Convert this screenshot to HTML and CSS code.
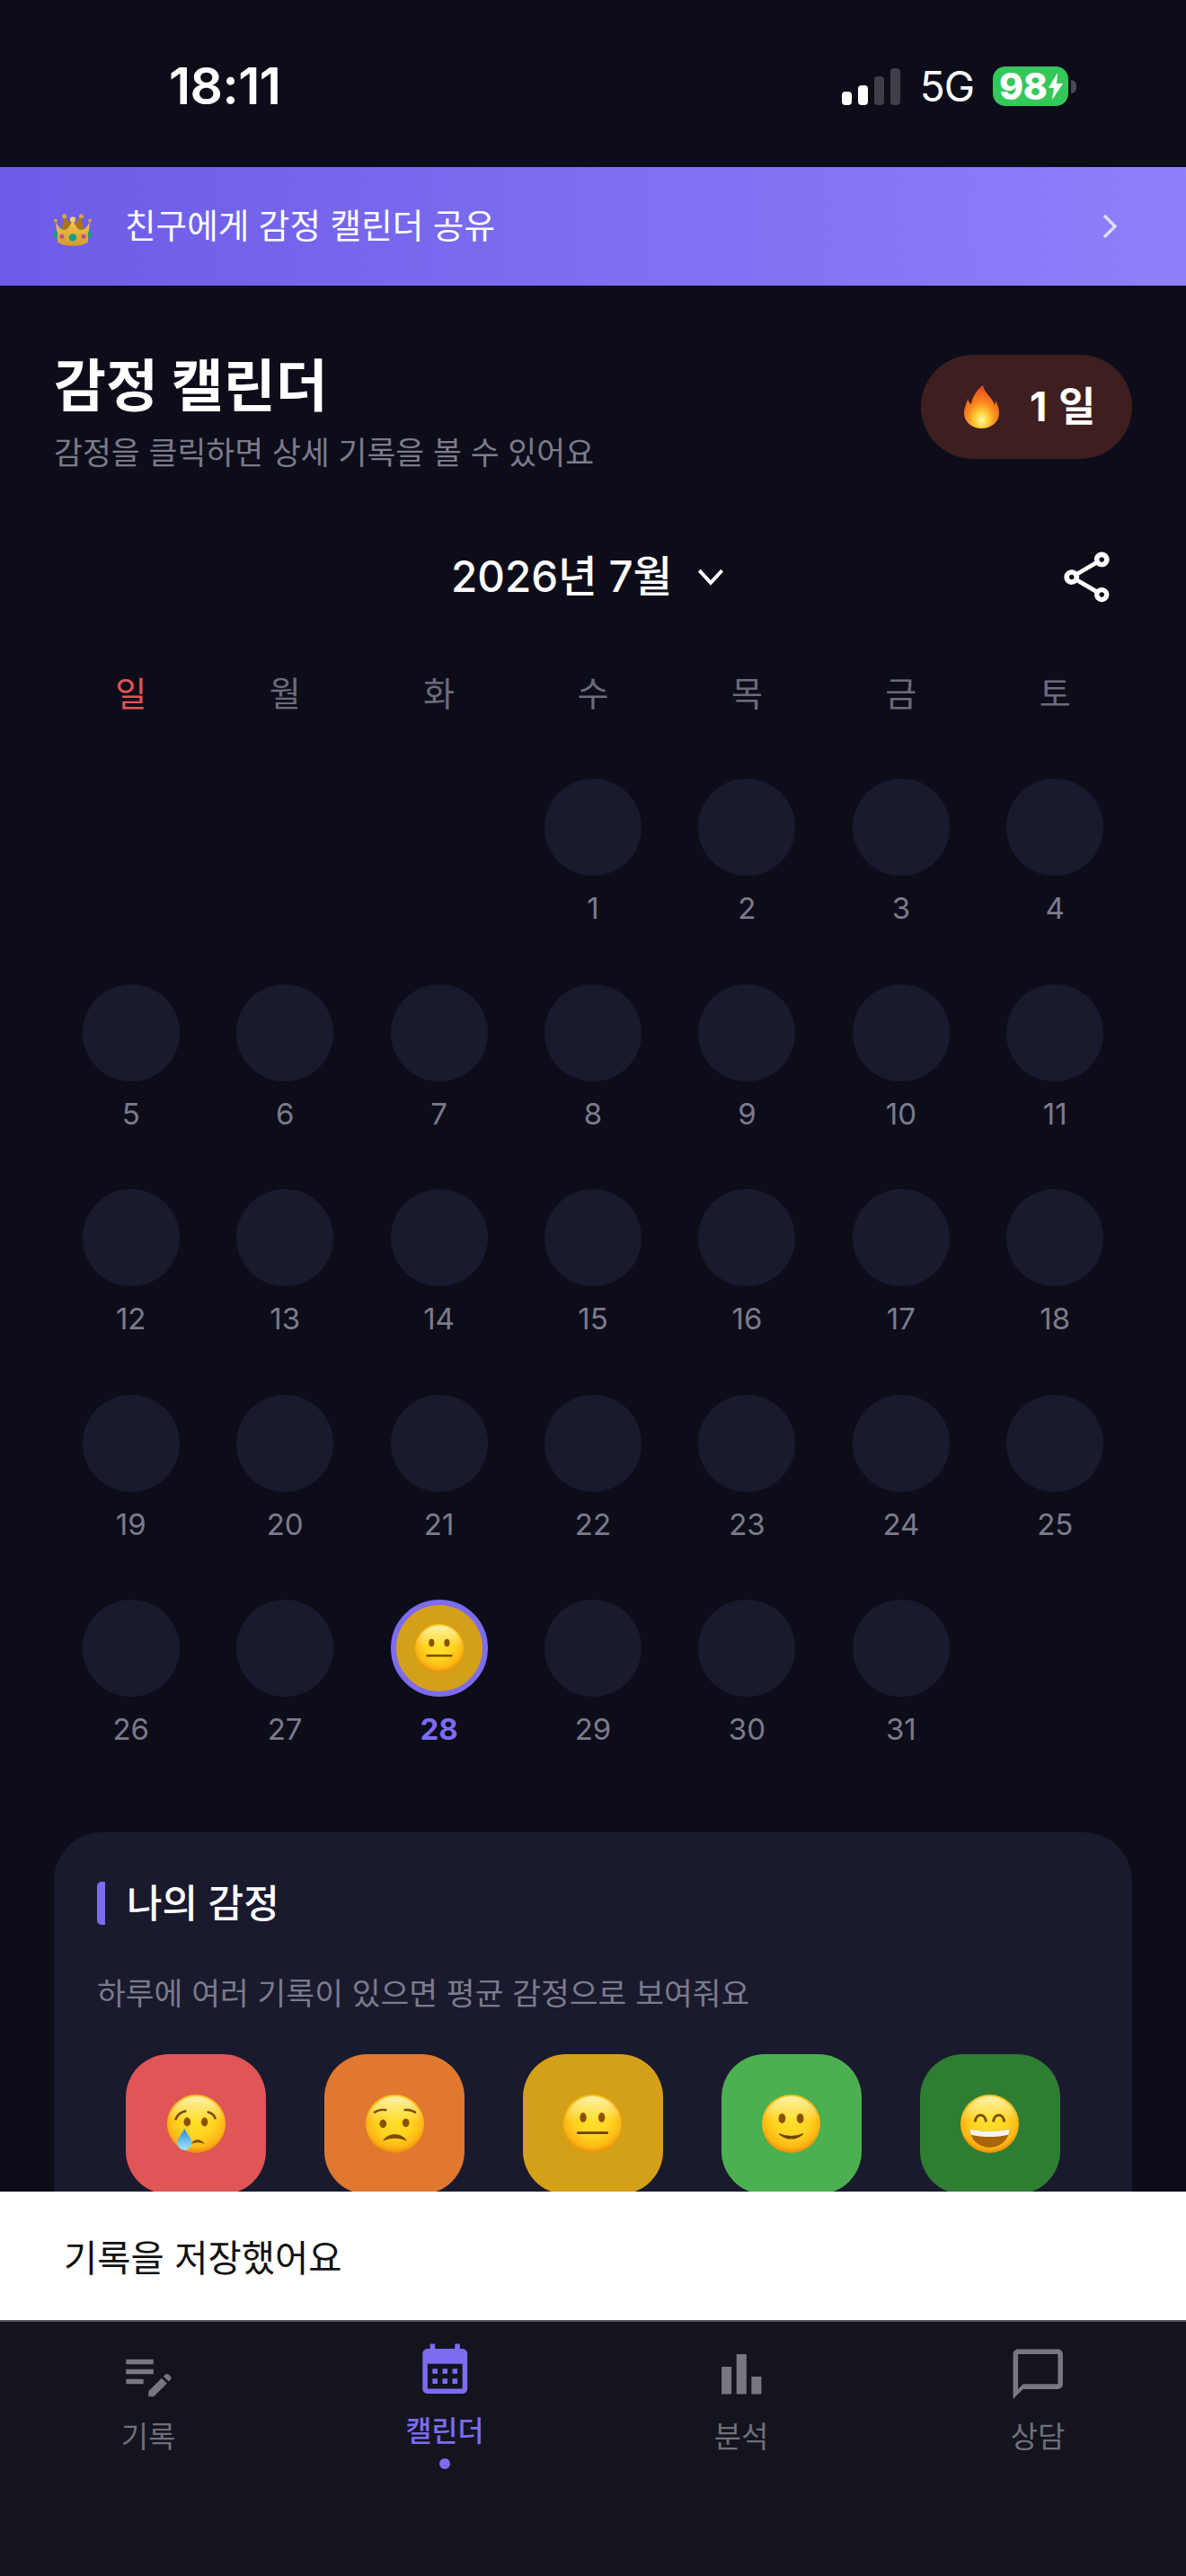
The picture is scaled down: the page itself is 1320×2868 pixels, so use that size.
FILE: index.html
```html
<!DOCTYPE html>
<html lang="ko">
<head>
<meta charset="utf-8">
<title>감정 캘린더</title>
<link rel="stylesheet" href="styles.css">
</head>
<body>
<svg class="defs" width="0" height="0" aria-hidden="true">
  <defs>
    <radialGradient id="face" cx="50%" cy="42%" r="58%">
      <stop offset="0" stop-color="#ffe22e"/>
      <stop offset=".55" stop-color="#ffd21f"/>
      <stop offset=".85" stop-color="#fdb515"/>
      <stop offset="1" stop-color="#e98c05"/>
    </radialGradient>
    <linearGradient id="shine" x1="0" y1="0" x2="0" y2="1">
      <stop offset="0" stop-color="#fff9c4" stop-opacity=".85"/>
      <stop offset=".45" stop-color="#fff9c4" stop-opacity="0"/>
    </linearGradient>
    <linearGradient id="drop" x1="0" y1="0" x2="0" y2="1">
      <stop offset="0" stop-color="#1e88d8"/>
      <stop offset="1" stop-color="#a6e6fb"/>
    </linearGradient>
    <radialGradient id="flame" cx="50%" cy="80%" r="72%">
      <stop offset="0" stop-color="#fff8b0"/>
      <stop offset=".25" stop-color="#ffd23a"/>
      <stop offset=".55" stop-color="#fb8c1e"/>
      <stop offset="1" stop-color="#e8501c"/>
    </radialGradient>
    <linearGradient id="gold" x1="0" y1="0" x2="0" y2="1">
      <stop offset="0" stop-color="#f3c955"/>
      <stop offset="1" stop-color="#d49a2a"/>
    </linearGradient>
    <g id="disc">
      <circle cx="32" cy="32" r="32" fill="url(#face)"/>
      <circle cx="32" cy="32" r="30" fill="url(#shine)"/>
    </g>
  </defs>
</svg>
<div class="app">
  <div class="scroll">
    <header class="status">
      <span class="time">18:11</span>
      <span class="signal"><i class="s1"></i><i class="s2"></i><i class="s3"></i><i class="s4"></i></span>
      <span class="net">5G</span>
      <span class="battery">98<svg class="bolt" viewBox="0 0 18 30"><path d="M11 0 1 17h6L5 30 17 12h-7z" fill="#fff"/></svg></span>
      <span class="nub"></span>
    </header>

    <div class="banner">
      <svg class="crown" viewBox="0 0 40 34">
        <path d="M7 22 11 3l9 10 9-10 4 19z" fill="#a8741c"/>
        <path d="M2 8c2 5 5 9 9 9 4 0 7-6 9-11 2 5 5 11 9 11 4 0 7-4 9-9l-2 22c-5 3-10 4-16 4S9 33 4 30z" fill="url(#gold)"/>
        <circle cx="1.8" cy="7" r="1.8" fill="#d8a53a"/>
        <circle cx="11" cy="2.4" r="2.4" fill="#d8a53a"/>
        <circle cx="20" cy="6" r="3" fill="#f0cb60"/>
        <circle cx="29" cy="2.4" r="2.4" fill="#d8a53a"/>
        <circle cx="38.2" cy="7" r="1.8" fill="#d8a53a"/>
        <ellipse cx="2" cy="22" rx="2" ry="4" fill="#1f9c7c"/>
        <circle cx="8.500" cy="24" r="2.400" fill="#c9478e"/>
        <circle cx="20" cy="25" r="4" fill="#14a083"/>
        <circle cx="31.500" cy="24" r="2.400" fill="#c9478e"/>
        <ellipse cx="38" cy="22" rx="2" ry="4" fill="#1f9c7c"/>
      </svg>
      <span class="banner-text">친구에게 감정 캘린더 공유</span>
      <svg class="banner-arrow" viewBox="0 0 18 28"><path d="M3 2l12 12L3 26" fill="none" stroke="#fff" stroke-opacity=".72" stroke-width="3.500"/></svg>
    </div>

    <section class="head">
      <div class="head-text">
        <h1 class="title">감정 캘린더</h1>
        <p class="subtitle">감정을 클릭하면 상세 기록을 볼 수 있어요</p>
      </div>
      <div class="streak">
        <svg class="fire" viewBox="0 0 39 48"><path d="M21 0c1 8 11 14 13 22 1-2 1-4 1-5 3 5 4 10 4 14 0 10-9 17-19.500 17S0 41 0 31c0-6 3-11 4-16 1 3 2 5 4 6C9 13 14 5 21 0z" fill="url(#flame)"/></svg>
        <span class="streak-text">1 일</span>
      </div>
    </section>

    <section class="month">
      <span class="month-label">2026년 7월</span>
      <svg class="month-chevron" viewBox="0 0 28 18"><path d="M2 2l12 13L26 2" fill="none" stroke="#fff" stroke-width="3.600"/></svg>
      <svg class="share" viewBox="0 0 24 24"><path fill="#fff" d="M18 16.080c-.76 0-1.440.3-1.960.77L8.910 12.700c.05-.23.09-.46.09-.7s-.04-.47-.09-.7l7.050-4.110c.54.5 1.250.81 2.040.81 1.660 0 3-1.340 3-3s-1.340-3-3-3-3 1.340-3 3c0 .24.04.47.09.7L8.040 9.810C7.500 9.310 6.790 9 6 9c-1.660 0-3 1.340-3 3s1.340 3 3 3c.79 0 1.500-.31 2.040-.81l7.120 4.160c-.05.21-.08.43-.08.65 0 1.610 1.310 2.920 2.920 2.920s2.920-1.310 2.920-2.920-1.310-2.920-2.920-2.920zM18 4c.55 0 1 .45 1 1s-.45 1-1 1-1-.45-1-1 .45-1 1-1zM6 13c-.55 0-1-.45-1-1s.45-1 1-1 1 .45 1 1-.45 1-1 1zm12 7.020c-.55 0-1-.45-1-1s.45-1 1-1 1 .45 1 1-.45 1-1 1z"/></svg>
    </section>

    <div class="weekdays">
      <span class="sun">일</span><span>월</span><span>화</span><span>수</span><span>목</span><span>금</span><span>토</span>
    </div>

    <div class="calendar">
      <div class="day empty"></div><div class="day empty"></div><div class="day empty"></div>
      <div class="day"><span class="dot"></span><span class="num">1</span></div>
      <div class="day"><span class="dot"></span><span class="num">2</span></div>
      <div class="day"><span class="dot"></span><span class="num">3</span></div>
      <div class="day"><span class="dot"></span><span class="num">4</span></div>
      <div class="day"><span class="dot"></span><span class="num">5</span></div>
      <div class="day"><span class="dot"></span><span class="num">6</span></div>
      <div class="day"><span class="dot"></span><span class="num">7</span></div>
      <div class="day"><span class="dot"></span><span class="num">8</span></div>
      <div class="day"><span class="dot"></span><span class="num">9</span></div>
      <div class="day"><span class="dot"></span><span class="num">10</span></div>
      <div class="day"><span class="dot"></span><span class="num">11</span></div>
      <div class="day"><span class="dot"></span><span class="num">12</span></div>
      <div class="day"><span class="dot"></span><span class="num">13</span></div>
      <div class="day"><span class="dot"></span><span class="num">14</span></div>
      <div class="day"><span class="dot"></span><span class="num">15</span></div>
      <div class="day"><span class="dot"></span><span class="num">16</span></div>
      <div class="day"><span class="dot"></span><span class="num">17</span></div>
      <div class="day"><span class="dot"></span><span class="num">18</span></div>
      <div class="day"><span class="dot"></span><span class="num">19</span></div>
      <div class="day"><span class="dot"></span><span class="num">20</span></div>
      <div class="day"><span class="dot"></span><span class="num">21</span></div>
      <div class="day"><span class="dot"></span><span class="num">22</span></div>
      <div class="day"><span class="dot"></span><span class="num">23</span></div>
      <div class="day"><span class="dot"></span><span class="num">24</span></div>
      <div class="day"><span class="dot"></span><span class="num">25</span></div>
      <div class="day"><span class="dot"></span><span class="num">26</span></div>
      <div class="day"><span class="dot"></span><span class="num">27</span></div>
      <div class="day today">
        <span class="dot">
          <svg class="face-sm" viewBox="0 0 64 64">
            <use href="#disc"/>
            <ellipse cx="21.700" cy="25" rx="3.600" ry="5.200" fill="#8a5200"/>
            <ellipse cx="42" cy="25" rx="3.600" ry="5.200" fill="#8a5200"/>
            <path d="M16 42h32" stroke="#6e4200" stroke-width="2.800" stroke-linecap="round"/>
          </svg>
        </span>
        <span class="num">28</span>
      </div>
      <div class="day"><span class="dot"></span><span class="num">29</span></div>
      <div class="day"><span class="dot"></span><span class="num">30</span></div>
      <div class="day"><span class="dot"></span><span class="num">31</span></div>
    </div>

    <section class="card">
      <h2 class="card-title">나의 감정</h2>
      <p class="card-hint">하루에 여러 기록이 있으면 평균 감정으로 보여줘요</p>
      <div class="moods">
        <div class="mood m1">
          <svg class="face" viewBox="0 0 64 64">
            <use href="#disc"/>
            <path d="M9 28c2-6 6-9 12-10" fill="none" stroke="#7a4a00" stroke-width="2.400"/>
            <path d="M44 19c5 1 8 4 9 8" fill="none" stroke="#7a4a00" stroke-width="2.400"/>
            <ellipse cx="22" cy="30" rx="3.800" ry="5" fill="#8a5200"/>
            <ellipse cx="41" cy="30" rx="3.600" ry="5" fill="#8a5200"/>
            <path d="M26 54c4-6 11-6 15 0-5-2-10-2-15 0z" fill="#7a4a00"/>
            <path d="M19 37c2 6 8 10 8 16a8 8 0 0 1-16 0c0-6 6-10 8-16z" fill="url(#drop)"/>
          </svg>
        </div>
        <div class="mood m2">
          <svg class="face" viewBox="0 0 64 64">
            <use href="#disc"/>
            <path d="M9 20c4-3 9-4 14-3" fill="none" stroke="#7a4a00" stroke-width="2.400"/>
            <path d="M42 17c5-1 9 0 13 3" fill="none" stroke="#7a4a00" stroke-width="2.400"/>
            <ellipse cx="19" cy="32" rx="3.800" ry="4.600" fill="#8a5200"/>
            <ellipse cx="44" cy="31" rx="3.800" ry="4.600" fill="#8a5200"/>
            <path d="M19 51c4-10 22-10 26 0-8-4-18-4-26 0z" fill="#7a4a00"/>
          </svg>
        </div>
        <div class="mood m3">
          <svg class="face" viewBox="0 0 64 64">
            <use href="#disc"/>
            <ellipse cx="21.700" cy="25" rx="3.600" ry="5.200" fill="#8a5200"/>
            <ellipse cx="42" cy="25" rx="3.600" ry="5.200" fill="#8a5200"/>
            <path d="M16 42h32" stroke="#6e4200" stroke-width="2.800" stroke-linecap="round"/>
          </svg>
        </div>
        <div class="mood m4">
          <svg class="face" viewBox="0 0 64 64">
            <use href="#disc"/>
            <ellipse cx="22" cy="26" rx="3.800" ry="5.400" fill="#8a5200"/>
            <ellipse cx="42" cy="26" rx="3.800" ry="5.400" fill="#8a5200"/>
            <path d="M19 43c8 7 18 7 26 0-8 4-18 4-26 0z" fill="#6e4200" stroke="#6e4200" stroke-width="1.200"/>
          </svg>
        </div>
        <div class="mood m5">
          <svg class="face" viewBox="0 0 64 64">
            <use href="#disc"/>
            <path d="M16 30c1-10 11-10 12 0" fill="none" stroke="#7a4a00" stroke-width="2.800"/>
            <path d="M36 30c1-10 11-10 12 0" fill="none" stroke="#7a4a00" stroke-width="2.800"/>
            <path d="M10 38c14 3 30 3 44 0-1 12-10 20-22 20S11 50 10 38z" fill="#a8650a"/>
            <path d="M10 38c14 3 30 3 44 0l-1.500 6c-13 3-28 3-41 0z" fill="#f4f4f4"/>
          </svg>
        </div>
      </div>
    </section>
  </div>

  <div class="toast">기록을 저장했어요</div>

  <nav class="tabs">
    <div class="tab">
      <svg class="tab-icon" viewBox="0 0 24 24"><path fill="#77777f" d="M3 10h11v2H3zM3 6h11v2H3zM3 14h7v2H3zM18.010 12.870l.71-.71c.39-.39 1.020-.39 1.410 0l.71.71c.39.39.39 1.020 0 1.410l-.71.71-2.120-2.120zM17.300 13.580 12 18.880V21h2.120l5.300-5.300-2.120-2.120z"/></svg>
      <span class="tab-label">기록</span>
    </div>
    <div class="tab active">
      <svg class="tab-icon" viewBox="0 0 24 24"><path fill="#7c6cf0" d="M19 4h-1V2h-2v2H8V2H6v2H5c-1.110 0-1.990.9-1.990 2L3 20c0 1.100.89 2 2 2h14c1.100 0 2-.9 2-2V6c0-1.100-.9-2-2-2zm0 16H5V10h14v10zM9 14H7v-2h2v2zm4 0h-2v-2h2v2zm4 0h-2v-2h2v2zm-8 4H7v-2h2v2zm4 0h-2v-2h2v2zm4 0h-2v-2h2v2z"/></svg>
      <span class="tab-label">캘린더</span>
      <span class="tab-dot"></span>
    </div>
    <div class="tab">
      <svg class="tab-icon" viewBox="0 0 24 24"><path fill="#77777f" d="M4 9h4v11H4zM10 4h4v16h-4zM16 13h4v7h-4z"/></svg>
      <span class="tab-label">분석</span>
    </div>
    <div class="tab">
      <svg class="tab-icon" viewBox="0 0 24 24"><path fill="#77777f" d="M20 2H4c-1.100 0-2 .9-2 2v18l4-4h14c1.100 0 2-.9 2-2V4c0-1.100-.9-2-2-2zm0 14H6l-2 2V4h16v12z"/></svg>
      <span class="tab-label">상담</span>
    </div>
  </nav>
</div>
</body>
</html>
```

FILE: styles.css
```css
* { box-sizing: border-box; }

html, body {
  margin: 0;
  padding: 0;
  background: #0d0d1a;
}

body {
  font-family: Inter, "Noto Sans CJK KR", sans-serif;
  color: #fff;
}

.defs { display: block; height: 0; }

.app {
  width: 1320px;
  height: 2868px;
  display: flex;
  flex-direction: column;
  overflow: hidden;
  background: #0d0d1a;
}

.scroll {
  flex: 1 1 0;
  min-height: 0;
  overflow: hidden;
}

/* status bar */
.status {
  height: 186px;
  display: flex;
  align-items: center;
  padding: 6px 122px 0 188px;
}

.time {
  font-size: 57px;
  font-weight: 600;
  line-height: 60px;
  margin-right: auto;
  width: 124px;
  white-space: nowrap;
  letter-spacing: -.5px;
}

.signal {
  display: flex;
  align-items: flex-end;
  gap: 7px;
  height: 41px;
  margin-right: -2px;
}

.signal i {
  width: 11px;
  border-radius: 4px;
  background: #fff;
}

.signal .s1 { height: 15px; }
.signal .s2 { height: 22px; }
.signal .s3 { height: 32px; background: #3f3f4a; }
.signal .s4 { height: 41px; background: #3f3f4a; }

.net {
  margin-left: 24px;
  font-size: 46px;
  font-weight: 400;
  line-height: 44px;
  letter-spacing: -1px;
}

.battery {
  margin-left: 21px;
  width: 84px;
  height: 44px;
  border-radius: 14px;
  background: #34c759;
  display: flex;
  align-items: center;
  padding-left: 7px;
  font-size: 41px;
  font-weight: 800;
  line-height: 44px;
  letter-spacing: -.5px;
}

.bolt {
  width: 18px;
  height: 30px;
  margin-left: 1px;
  flex: none;
}

.nub {
  width: 6px;
  height: 15px;
  margin-left: 3px;
  border-radius: 0 8px 8px 0;
  background: #4a4a55;
}

/* banner */
.banner {
  height: 132px;
  display: flex;
  align-items: center;
  padding: 0 76px 0 60px;
  background: linear-gradient(90deg, #6c5ce7, #8f7ffa);
}

.crown {
  width: 42px;
  height: 36px;
  margin-top: 8px;
  flex: none;
}

.banner-text {
  margin-left: 37px;
  font-size: 37.600px;
  font-weight: 400;
  line-height: 50px;
  margin-right: auto;
}

.banner-arrow {
  width: 18px;
  height: 28px;
}

/* heading */
.head {
  height: 116px;
  margin-top: 77px;
  padding: 0 60px;
  display: flex;
  align-items: flex-start;
  justify-content: space-between;
}

.title {
  margin: 0;
  font-size: 63px;
  font-weight: 700;
  line-height: 68px;
  white-space: nowrap;
}

.subtitle {
  margin: 21px 0 0;
  font-size: 34.700px;
  font-weight: 400;
  line-height: 40px;
  color: #7b7b8b;
  white-space: nowrap;
}

.streak {
  width: 235px;
  height: 116px;
  border-radius: 58px;
  background: #3d1f1f;
  display: flex;
  align-items: center;
  padding-left: 48px;
}

.fire {
  width: 39px;
  height: 48px;
  flex: none;
}

.streak-text {
  margin-left: 34px;
  font-size: 45px;
  font-weight: 700;
  line-height: 50px;
  white-space: nowrap;
  word-spacing: 2px;
}

/* month selector */
.month {
  height: 68px;
  margin-top: 97px;
  padding: 0 77px 0 502px;
  display: flex;
  align-items: center;
}

.month-label {
  font-size: 47.500px;
  font-weight: 500;
  line-height: 60px;
  white-space: nowrap;
}

.month-chevron {
  width: 30px;
  height: 19px;
  margin-left: 28px;
}

.share {
  width: 67px;
  height: 67px;
  margin-left: auto;
}

/* calendar */
.weekdays {
  height: 50px;
  margin: 71px 60px 0;
  display: grid;
  grid-template-columns: repeat(7, 1fr);
  text-align: center;
  font-size: 38px;
  line-height: 50px;
  color: #6b6b7b;
}

.weekdays .sun { color: #e05555; }

.calendar {
  margin: 70px 60px 0;
  display: grid;
  grid-template-columns: repeat(7, 1fr);
  grid-auto-rows: 228.600px;
}

.day {
  display: flex;
  flex-direction: column;
  align-items: center;
}

.dot {
  width: 108px;
  height: 108px;
  border-radius: 50%;
  background: #1a1a2e;
  flex: none;
}

.num {
  margin-top: 16px;
  font-size: 33px;
  line-height: 40px;
  color: #7b7b8b;
}

.today .dot {
  background: #d4a017;
  border: 6px solid #7c6cf0;
  display: flex;
  align-items: center;
  justify-content: center;
}

.today .num {
  color: #7c6cf0;
  font-weight: 700;
}

.face-sm {
  width: 54px;
  height: 54px;
}

/* emotions card */
.card {
  margin: 30px 60px 0;
  padding: 55px 48px 48px;
  border-radius: 54px;
  background: #1a1a2e;
}

.card-title {
  margin: 0;
  padding-left: 24px;
  border-left: 9px solid #7c6cf0;
  border-radius: 5px;
  font-size: 43px;
  font-weight: 500;
  line-height: 48px;
  white-space: nowrap;
}

.card-hint {
  margin: 54px 0 0;
  font-size: 34.600px;
  line-height: 44px;
  color: #7b7b8b;
  white-space: nowrap;
}

.moods {
  margin-top: 46px;
  display: flex;
  justify-content: space-around;
}

.mood {
  width: 156px;
  height: 156px;
  border-radius: 48px;
  display: flex;
  align-items: center;
  justify-content: center;
}

.m1 { background: #e05555; }
.m2 { background: #e07830; }
.m3 { background: #d4a017; }
.m4 { background: #4caf50; }
.m5 { background: #2e7d32; }

.face {
  width: 65px;
  height: 65px;
}

/* toast */
.toast {
  height: 145px;
  flex: none;
  padding-left: 71px;
  background: #fff;
  border-bottom: 2px solid #55555c;
  display: flex;
  align-items: center;
  font-size: 40.500px;
  color: #111;
}

/* tab bar */
.tabs {
  height: 283px;
  flex: none;
  padding-top: 25px;
  display: grid;
  grid-template-columns: repeat(4, 1fr);
  align-items: start;
  background: #14141f;
}

.tab {
  display: flex;
  flex-direction: column;
  align-items: center;
}

.tab-icon {
  width: 66.500px;
  height: 66.500px;
}

.tab-label {
  margin-top: 16px;
  font-size: 33px;
  line-height: 40px;
  color: #6f6f78;
}

.tab.active { margin-top: -6px; }

.tab.active .tab-label {
  color: #7c6cf0;
  font-weight: 500;
  font-size: 31.500px;
}

.tab-dot {
  width: 12px;
  height: 12px;
  margin-top: 10px;
  border-radius: 50%;
  background: #7c6cf0;
}
```
